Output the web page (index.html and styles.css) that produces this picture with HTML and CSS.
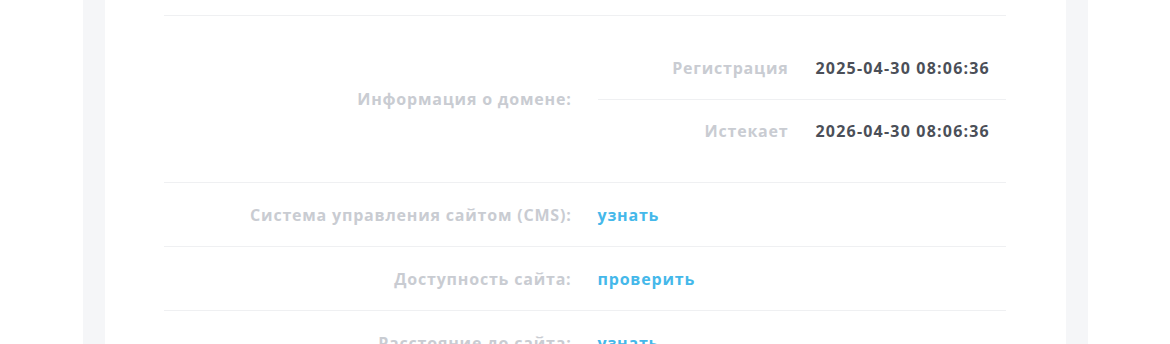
FILE: index.html
```html
<!DOCTYPE html>
<html lang="ru">
<head>
	<meta charset="UTF-8">
	<meta name="viewport" content="width=device-width, initial-scale=1.0">
	<title>Информация о сайте</title>
	<link rel="stylesheet" href="styles.css">
</head>
<body>
	<div class="wrap">
		<div class="card">
			<div class="info">
				<div class="row">
					<div class="label">Информация о домене:</div>
					<div class="value">
						<div class="sub">
							<div class="sub-row">
								<div class="sub-label">Регистрация</div>
								<div class="sub-value">2025-04-30 08:06:36</div>
							</div>
							<div class="sub-row">
								<div class="sub-label">Истекает</div>
								<div class="sub-value">2026-04-30 08:06:36</div>
							</div>
						</div>
					</div>
				</div>
				<div class="row">
					<div class="label">Система управления сайтом (CMS):</div>
					<div class="value"><a href="#">узнать</a></div>
				</div>
				<div class="row">
					<div class="label">Доступность сайта:</div>
					<div class="value"><a href="#">проверить</a></div>
				</div>
				<div class="row">
					<div class="label">Расстояние до сайта:</div>
					<div class="value"><a href="#">узнать</a></div>
				</div>
			</div>
		</div>
	</div>
</body>
</html>
```

FILE: styles.css
```css
* {
	margin: 0;
	padding: 0;
	box-sizing: border-box;
}

html, body {
	height: 344px;
	overflow: hidden;
}

body {
	font-family: 'Open Sans', 'DejaVu Sans', sans-serif;
	font-weight: 700;
	font-size: 16px;
	letter-spacing: 0.8px;
	background: #fff;
	color: #4b4f58;
}

.wrap {
	width: 1005px;
	margin: 0 auto;
	padding: 0 22px;
	background: #f5f6f8;
	height: 344px;
}

.card {
	background: #fff;
	height: 100%;
	padding: 15px 60px 0 59px;
}

.info {
	border-top: 1px solid #eff0f2;
}

.row {
	display: grid;
	grid-template-columns: 1fr 1fr;
	align-items: center;
	min-height: 64px;
	border-bottom: 1px solid #eff0f2;
}

.label {
	text-align: right;
	padding-right: 13px;
	color: #c9ccd2;
}

.value {
	padding-left: 13px;
}

.value a {
	color: #45b8ea;
	text-decoration: none;
}

/* вложенная таблица дат */
.sub {
	padding: 20px 0;
}

.sub-row {
	display: grid;
	grid-template-columns: 1fr 1fr;
	align-items: center;
	height: 63px;
}

.sub-row + .sub-row {
	border-top: 1px solid #eff0f2;
}

.sub-label {
	text-align: right;
	padding-right: 13px;
	color: #c9ccd2;
}

.sub-value {
	padding-left: 14px;
	color: #4b4f58;
	letter-spacing: 1.2px;
}
```
